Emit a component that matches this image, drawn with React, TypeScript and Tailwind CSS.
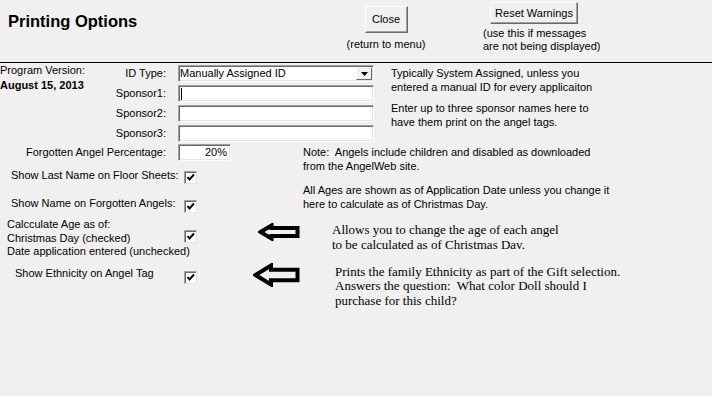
import React from 'react'

const ui = { fontFamily: '"Liberation Sans", Arial, sans-serif' }
const serif = { fontFamily: '"Liberation Serif", "Times New Roman", serif' }

function Check() {
    return (
        <span className="flex h-[13px] w-[13px] shrink-0 items-center justify-center border border-t-[#a0a0a0] border-l-[#a0a0a0] border-r-[#e3e3e3] border-b-[#e3e3e3] bg-white shadow-[inset_1px_1px_0_#696969]">
            <svg width="9" height="9" viewBox="0 0 9 9">
                <polyline points="1.5,4 3.5,6.5 8,1.5" fill="none" stroke="#000" strokeWidth="2" />
            </svg>
        </span>
    )
}

function Field({ children, className = '' }: { children?: React.ReactNode; className?: string }) {
    return (
        <div className={`flex h-[17px] items-center border border-t-[#a0a0a0] border-l-[#a0a0a0] border-r-white border-b-white bg-white shadow-[inset_1px_1px_0_#696969,inset_-1px_-1px_0_#e3e3e3] ${className}`}>
            {children}
        </div>
    )
}

function Arrow({ w, h }: { w: number; h: number }) {
    const m = h / 2
    const head = h * 0.75
    const t = h * 0.22
    return (
        <svg width={w} height={h} viewBox={`0 0 ${w} ${h}`}>
            <polygon
                points={`2.5,${m} ${head},2.5 ${head},${m - t} ${w - 2.5},${m - t} ${w - 2.5},${m + t} ${head},${m + t} ${head},${h - 2.5}`}
                fill="none"
                stroke="#000"
                strokeWidth="4"
                strokeLinejoin="miter"
            />
        </svg>
    )
}

export default function App() {
    return (
        <div className="h-[396px] w-[712px] overflow-hidden bg-[#f0f0f0] text-[11px] leading-[13px] text-black" style={ui}>

            {/* header */}
            <div className="flex h-[62px]">
                <div className="w-[347px] pl-[8px] pt-[11px] text-[16.5px] font-bold leading-[20px]">Printing Options</div>
                <div className="flex w-[78px] flex-col items-center pt-[6px]">
                    <button className="h-[27px] w-[43px] border border-t-white border-l-white border-r-[#696969] border-b-[#696969] bg-[#f0f0f0] shadow-[inset_-1px_-1px_0_#a0a0a0]">Close</button>
                    <div className="mt-[5px] whitespace-nowrap">(return to menu)</div>
                </div>
                <div className="ml-[58px] flex flex-col pt-[2px]">
                    <button className="ml-[7px] h-[22px] w-[88px] border border-t-white border-l-white border-r-[#696969] border-b-[#696969] bg-[#f0f0f0] shadow-[inset_-1px_-1px_0_#a0a0a0]">Reset Warnings</button>
                    <div className="mt-[3px] whitespace-nowrap">(use this if messages<br />are not being displayed)</div>
                </div>
            </div>
            <div className="h-px bg-black" />

            {/* id + sponsors */}
            <div className="flex">
                <div className="w-[110px] whitespace-nowrap leading-[14px]">
                    <div>Program Version:</div>
                    <div className="font-bold leading-[16px]">August 15, 2013</div>
                </div>
                <div className="flex w-[56px] flex-col gap-[3px] pt-[2px] text-right">
                    {['ID Type:', 'Sponsor1:', 'Sponsor2:', 'Sponsor3:'].map((l) => (
                        <div key={l} className="flex h-[17px] items-center justify-end whitespace-nowrap">{l}</div>
                    ))}
                </div>
                <div className="ml-[12px] flex w-[196px] flex-col gap-[3px] pt-[2px]">
                    <Field className="justify-between pl-[1px] pr-[1px]">
                        <span>Manually Assigned ID</span>
                        <span className="flex h-[13px] w-[16px] items-center justify-center border border-t-white border-l-white border-r-[#696969] border-b-[#696969] bg-[#f0f0f0]">
                            <svg width="7" height="4" viewBox="0 0 7 4"><polygon points="0,0 7,0 3.5,4" fill="#000" /></svg>
                        </span>
                    </Field>
                    <Field className="pl-[2px]"><span className="h-[12px] w-px bg-black" /></Field>
                    <Field />
                    <Field />
                </div>
                <div className="ml-[17px] pt-[3px] leading-[14px]">
                    <div>Typically System Assigned, unless you<br />entered a manual ID for every applicaiton</div>
                    <div className="mt-[7px]">Enter up to three sponsor names here to<br />have them print on the angel tags.</div>
                </div>
            </div>

            {/* percentage + floor sheets */}
            <div className="flex">
                <div className="w-[303px]">
                    <div className="mt-[2px] flex h-[16px] items-center">
                        <div className="w-[166px] text-right">Forgotten Angel Percentage:</div>
                        <Field className="ml-[12px] h-[16px] w-[53px] justify-end pr-[3px]">20%</Field>
                    </div>
                    <div className="mt-[8px] flex items-start pl-[11px]">
                        <div className="w-[173px] whitespace-nowrap leading-[14px]">Show Last Name on Floor Sheets:</div>
                        <div className="mt-[3px]"><Check /></div>
                    </div>
                    <div className="mt-[12px] flex items-start pl-[11px]">
                        <div className="w-[173px] whitespace-nowrap leading-[14px]">Show Name on Forgotten Angels:</div>
                        <div className="mt-[4px]"><Check /></div>
                    </div>
                </div>
                <div className="pt-[3px] leading-[14px]">
                    <div>Note:&nbsp; Angels include children and disabled as downloaded<br />from the AngelWeb site.</div>
                    <div className="mt-[10px]">All Ages are shown as of Application Date unless you change it<br />here to calculate as of Christmas Day.</div>
                </div>
            </div>

            {/* age calc */}
            <div className="mt-[5px] flex items-start">
                <div className="w-[184px] whitespace-nowrap pl-[7px] leading-[13.5px]">
                    Calcculate Age as of:<br />Christmas Day (checked)<br />Date application entered (unchecked)
                </div>
                <div className="mt-[12px]"><Check /></div>
                <div className="ml-[61px] mt-[5px]"><Arrow w={42} h={18} /></div>
                <div className="ml-[32px] mt-[4px] text-[13px] leading-[15px]" style={serif}>
                    Allows you to change the age of each angel<br />to be calculated as of Christmas Dav.
                </div>
            </div>

            {/* ethnicity */}
            <div className="mt-[4px] flex items-start">
                <div className="mt-[3px] w-[184px] whitespace-nowrap pl-[15px] leading-[14px]">Show Ethnicity on Angel Tag</div>
                <div className="mt-[8px]"><Check /></div>
                <div className="ml-[56px]"><Arrow w={47} h={24} /></div>
                <div className="ml-[35px] mt-[2px] text-[13px] leading-[14.5px]" style={serif}>
                    Prints the family Ethnicity as part of the Gift selection.<br />
                    Answers the question:&nbsp; What color Doll should I<br />
                    purchase for this child?
                </div>
            </div>
        </div>
    )
}
